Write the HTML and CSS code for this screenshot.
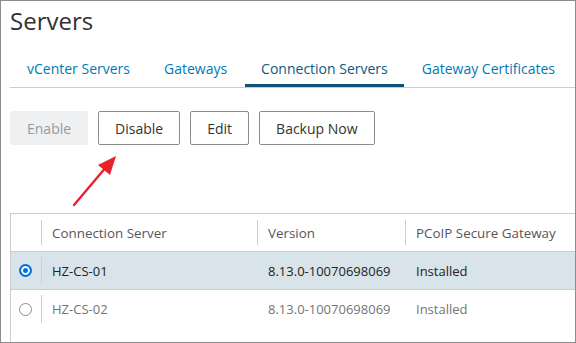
FILE: index.html
```html
<!DOCTYPE html>
<html lang="en">
<head>
  <meta charset="UTF-8" />
  <title>Servers</title>
  <link rel="stylesheet" href="styles.css">
</head>
<body>
  <div class="frame">
    <h1 class="page-title">Servers</h1>

    <!-- tabs -->
    <nav class="tabs">
      <a class="tab">vCenter Servers</a>
      <a class="tab">Gateways</a>
      <a class="tab active">Connection Servers</a>
      <a class="tab">Gateway Certificates</a>
    </nav>

    <!-- action buttons -->
    <div class="actions">
      <button class="btn" disabled>Enable</button>
      <button class="btn">Disable</button>
      <button class="btn">Edit</button>
      <button class="btn">Backup Now</button>
      <svg class="arrow" width="60" height="60" viewBox="0 0 60 60">
        <line x1="9" y1="54" x2="42" y2="15" stroke="#e8212b" stroke-width="2.4" stroke-linecap="round"/>
        <polygon points="51,5 33,14 45,24" fill="#e8212b"/>
      </svg>
    </div>

    <!-- grid -->
    <div class="grid">
      <div class="row head">
        <div class="cell sel"></div>
        <div class="cell name">Connection Server</div>
        <div class="cell ver">Version</div>
        <div class="cell gw">PCoIP Secure Gateway</div>
      </div>
      <div class="row selected">
        <div class="cell sel"><span class="radio on"></span></div>
        <div class="cell name">HZ-CS-01</div>
        <div class="cell ver">8.13.0-10070698069</div>
        <div class="cell gw">Installed</div>
      </div>
      <div class="row">
        <div class="cell sel"><span class="radio"></span></div>
        <div class="cell name">HZ-CS-02</div>
        <div class="cell ver">8.13.0-10070698069</div>
        <div class="cell gw">Installed</div>
      </div>
    </div>
  </div>
</body>
</html>
```

FILE: styles.css
```css
/* ===== Reset ===== */
* {
  margin: 0;
  padding: 0;
  box-sizing: border-box;
  font-family: 'Open Sans', sans-serif;
}
body {
  background: #fff;
}

/* ===== Frame ===== */
.frame {
  width: 576px;
  height: 343px;
  border: 1px solid #8c8c8c;
  overflow: hidden;
  padding: 0 0 0 9px;
}

/* ===== Title ===== */
.page-title {
  font-size: 24px;
  font-weight: 400;
  color: #313131;
  line-height: 30px;
  padding-top: 5px;
}

/* ===== Tabs ===== */
.tabs {
  display: flex;
  margin-top: 16px;
  border-bottom: 1px solid #cccccc;
  height: 36px;
}
.tab {
  display: block;
  padding: 0 16px;
  margin-right: 2px;
  font-size: 14px;
  line-height: 33px;
  color: #0079b8;
  border-bottom: 3px solid transparent;
}
.tab:first-child {
  margin-left: 1px;
}
.tab.active {
  color: #0a5a82;
  border-bottom-color: #0e5375;
}

/* ===== Buttons ===== */
.actions {
  position: relative;
  display: flex;
  gap: 10px;
  margin-top: 23px;
}
.btn {
  height: 34px;
  padding: 0 16px;
  background: #fff;
  border: 1px solid #8c8c8c;
  border-radius: 2px;
  font-size: 14px;
  color: #333;
}
.btn:disabled {
  background: #eef0f2;
  border-color: #eef0f2;
  color: #9a9a9a;
}
.arrow {
  position: absolute;
  left: 55px;
  top: 40px;
}

/* ===== Grid ===== */
.grid {
  margin-top: 68px;
  width: 640px;
  border: 1px solid #cccccc;
  border-right: none;
  border-bottom: none;
  height: 140px;
}
.row {
  display: flex;
  height: 38px;
  border-bottom: 1px solid #cccccc;
  font-size: 13px;
  color: #747474;
}
.row.head {
  color: #565656;
  font-size: 13.4px;
}
.row.selected {
  background: #d9e3ea;
  color: #222;
}
.row:last-child {
  border-bottom: none;
}
.cell {
  display: flex;
  align-items: center;
  padding-left: 10px;
  position: relative;
}
.head .cell + .cell::before {
  content: "";
  position: absolute;
  left: -1px;
  top: 6px;
  bottom: 6px;
  border-left: 1px solid #cfcfcf;
}
.cell.sel {
  width: 31px;
  padding-left: 0;
  justify-content: center;
}
.row:not(.head) .cell.sel::after {
  content: "";
  position: absolute;
  right: 0;
  top: 5px;
  bottom: 5px;
  border-left: 1px solid #cfcfcf;
}
.cell.name { width: 216px; }
.cell.ver  { width: 148px; }
.cell.gw   { flex: 1; }

.radio {
  width: 13px;
  height: 13px;
  border-radius: 50%;
  border: 1px solid #8c8c8c;
  background: #fff;
  margin-left: -2px;
}
.radio.on {
  border: 2px solid #0072e0;
  box-shadow: inset 0 0 0 2px #fff;
  background: #0072e0;
}
```
